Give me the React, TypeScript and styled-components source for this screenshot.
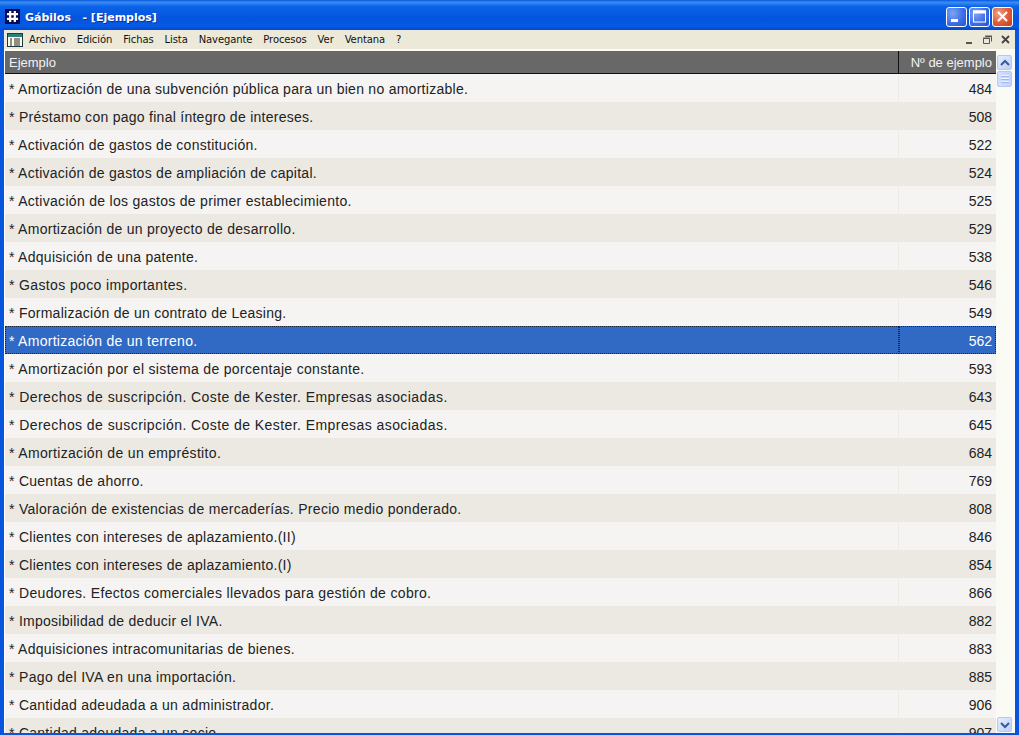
import styled, { createGlobalStyle } from 'styled-components';

const GlobalStyle = createGlobalStyle`
  html, body {
    margin: 0;
    padding: 0;
    overflow: hidden;
    background: #0054e3;
  }
`;

const Win = styled.div`
  width: 1019px;
  height: 735px;
  display: flex;
  flex-direction: column;
  overflow: hidden;
  font-family: "Liberation Sans", Arial, sans-serif;
  background: #0855dd;
`;

const TitleBar = styled.div`
  height: 30px;
  flex: none;
  display: flex;
  align-items: center;
  padding: 3px 6px 0 5px;
  box-sizing: border-box;
  background: linear-gradient(180deg, #0a5be0 0%, #3a8cf5 8%, #0a62e8 22%, #0555dd 60%, #0559e4 88%, #0347c8 100%);
`;

const AppIcon = styled.div`
  width: 15px;
  height: 15px;
  background: #000a50;
  margin-right: 5px;
  display: flex;
  align-items: center;
  justify-content: center;
`;

const TitleText = styled.span`
  color: #fff;
  font-family: "DejaVu Sans", sans-serif;
  font-weight: bold;
  font-size: 11px;
  margin-top: 1px;
  white-space: pre;
  text-shadow: 1px 1px 0 #0a2f9a;
  flex: 1;
`;

const WinButtons = styled.div`
  display: flex;
  gap: 2px;
`;

const WinButton = styled.div<{ $close?: boolean }>`
  width: 21px;
  height: 20px;
  box-sizing: border-box;
  border: 1px solid #fff;
  border-radius: 3px;
  display: flex;
  align-items: center;
  justify-content: center;
  background: ${p =>
    p.$close
      ? 'radial-gradient(circle at 30% 30%, #f0a088 0%, #e0603c 50%, #c23c18 100%)'
      : 'radial-gradient(circle at 30% 30%, #7fa4f5 0%, #3f6fe8 55%, #2450d0 100%)'};
`;

const Inner = styled.div`
  flex: 1;
  min-height: 0;
  display: flex;
  flex-direction: column;
  margin: 0 4px 2px 4px;
  background: #fff;
`;

const MenuBar = styled.div`
  height: 21px;
  flex: none;
  display: flex;
  align-items: center;
  box-sizing: border-box;
  background: #ece9d8;
  border-bottom: 2px solid #fbfaf5;
  padding-left: 3px;
  font-family: "DejaVu Sans", sans-serif;
  font-size: 10px;
  color: #111;
`;

const MenuIcon = styled.div`
  width: 16px;
  height: 14px;
  margin-right: 6px;
  display: flex;
`;

const MenuItem = styled.span`
  margin-right: 11px;
  letter-spacing: -0.1px;
`;

const MdiButtons = styled.div`
  margin-left: auto;
  display: flex;
  align-items: center;
  gap: 3px;
  padding-right: 2px;
`;

const MdiButton = styled.div`
  width: 15px;
  height: 15px;
  display: flex;
  align-items: center;
  justify-content: center;
`;

const Content = styled.div`
  flex: 1;
  min-height: 0;
  display: flex;
`;

const Grid = styled.div`
  flex: 1;
  min-width: 0;
  overflow: hidden;
  padding-left: 1px;
  background: #fff;
`;

const HeaderRow = styled.div`
  height: 23px;
  display: flex;
  background: #686868;
  border-bottom: 1px solid #111;
  box-sizing: border-box;
  color: #f2f2f2;
  font-size: 13px;
`;

const HeaderName = styled.div`
  flex: 1;
  display: flex;
  align-items: center;
  padding-left: 4px;
  border-right: 1px solid #111;
`;

const HeaderNumber = styled.div`
  width: 97px;
  display: flex;
  align-items: center;
  justify-content: flex-end;
  padding-right: 4px;
  box-sizing: border-box;
`;

const Row = styled.div<{ $alt: boolean; $selected: boolean }>`
  height: 28px;
  display: flex;
  align-items: center;
  font-size: 14px;
  color: ${p => (p.$selected ? '#fff' : '#222')};
  background: ${p => (p.$selected ? '#316ac5' : p.$alt ? '#ece9e2' : '#f5f4f2')};
`;

const NameCell = styled.div<{ $selected: boolean; $tracking: number }>`
  flex: 1;
  height: 100%;
  display: flex;
  align-items: center;
  padding: 2px 0 0 4px;
  box-sizing: border-box;
  white-space: nowrap;
  letter-spacing: ${p => p.$tracking}px;
  border-right: 1px solid ${p => (p.$selected ? '#316ac5' : '#ecebe6')};
  outline: ${p => (p.$selected ? '1px dotted #1a2438' : 'none')};
  outline-offset: -1px;
`;

const NumberCell = styled.div<{ $selected: boolean }>`
  width: 97px;
  height: 100%;
  display: flex;
  align-items: center;
  justify-content: flex-end;
  padding: 2px 4px 0 0;
  box-sizing: border-box;
  outline: ${p => (p.$selected ? '1px dotted #1a2438' : 'none')};
  outline-offset: -1px;
`;

const ScrollBar = styled.div`
  width: 19px;
  flex: none;
  display: flex;
  flex-direction: column;
  padding: 4px 0 1px 1px;
  box-sizing: border-box;
  background: #fbfbf6;
`;

const ScrollButton = styled.div`
  width: 15px;
  height: 15px;
  box-sizing: border-box;
  border: 1px solid #b4c8f6;
  border-radius: 2px;
  background: linear-gradient(135deg, #e6eefe, #bcd0fa);
  display: flex;
  align-items: center;
  justify-content: center;
`;

const ScrollThumb = styled.div`
  width: 15px;
  height: 16px;
  margin-top: 1px;
  box-sizing: border-box;
  border: 1px solid #b4c8f6;
  border-radius: 2px;
  background: linear-gradient(90deg, #d4e0fc, #c2d3fa);
  display: flex;
  flex-direction: column;
  align-items: center;
  justify-content: center;
  gap: 1px;

  i {
    display: block;
    width: 8px;
    height: 1px;
    background: #eef3fe;
    border-bottom: 1px solid #9db6ee;
  }
`;

const Spacer = styled.div`
  flex: 1;
`;

// third value: letter spacing, the original's hinted widths differ per line
const rows: [string, string, number?][] = [
  ['* Amortización de una subvención pública para un bien no amortizable.', '484'],
  ['* Préstamo con pago final íntegro de intereses.', '508'],
  ['* Activación de gastos de constitución.', '522'],
  ['* Activación de gastos de ampliación de capital.', '524'],
  ['* Activación de los gastos de primer establecimiento.', '525', 0.3],
  ['* Amortización de un proyecto de desarrollo.', '529'],
  ['* Adquisición de una patente.', '538'],
  ['* Gastos poco importantes.', '546', 0.37],
  ['* Formalización de un contrato de Leasing.', '549'],
  ['* Amortización de un terreno.', '562'],
  ['* Amortización por el sistema de porcentaje constante.', '593', 0.33],
  ['* Derechos de suscripción. Coste de Kester. Empresas asociadas.', '643', 0.43],
  ['* Derechos de suscripción. Coste de Kester. Empresas asociadas.', '645', 0.43],
  ['* Amortización de un empréstito.', '684', 0.33],
  ['* Cuentas de ahorro.', '769'],
  ['* Valoración de existencias de mercaderías. Precio medio ponderado.', '808', 0.3],
  ['* Clientes con intereses de aplazamiento.(II)', '846'],
  ['* Clientes con intereses de aplazamiento.(I)', '854'],
  ['* Deudores. Efectos comerciales llevados para gestión de cobro.', '866', 0.33],
  ['* Imposibilidad de deducir el IVA.', '882'],
  ['* Adquisiciones intracomunitarias de bienes.', '883'],
  ['* Pago del IVA en una importación.', '885', 0.33],
  ['* Cantidad adeudada a un administrador.', '906'],
  ['* Cantidad adeudada a un socio.', '907'],
];

const menus = ['Archivo', 'Edición', 'Fichas', 'Lista', 'Navegante', 'Procesos', 'Ver', 'Ventana', '?'];

function App() {
  return (
    <Win>
      <GlobalStyle />
      <TitleBar>
        <AppIcon>
          <svg width="13" height="13" viewBox="0 0 14 14">
            <path d="M4.5 1v12M9.5 1v12M1 4.5h12M1 9.5h12" stroke="#fff" strokeWidth="2.4" fill="none" />
          </svg>
        </AppIcon>
        <TitleText>{'Gábilos   - [Ejemplos]'}</TitleText>
        <WinButtons>
          <WinButton>
            <svg width="15" height="15" viewBox="0 0 15 15">
              <rect x="2" y="10" width="7" height="3" fill="#fff" />
            </svg>
          </WinButton>
          <WinButton>
            <svg width="15" height="15" viewBox="0 0 15 15">
              <rect x="1.5" y="2" width="12" height="11" fill="none" stroke="#fff" strokeWidth="1" />
              <rect x="1" y="1.5" width="13" height="3" fill="#fff" />
            </svg>
          </WinButton>
          <WinButton $close>
            <svg width="15" height="15" viewBox="0 0 15 15">
              <path d="M3 3l9 9M12 3l-9 9" stroke="#fff" strokeWidth="2.2" fill="none" />
            </svg>
          </WinButton>
        </WinButtons>
      </TitleBar>
      <Inner>
        <MenuBar>
          <MenuIcon>
            <svg width="16" height="14" viewBox="0 0 16 14">
              <rect x="0.5" y="0.5" width="15" height="13" fill="#fdfbe8" stroke="#1c3a44" />
              <rect x="1" y="1" width="14" height="3" fill="#2f7f7f" />
              <path d="M3 6h2M3 8h2M3 10h2M3 12h2M7 6h6M7 8h6M7 10h6M7 12h6" stroke="#222" strokeWidth="1" />
            </svg>
          </MenuIcon>
          {menus.map(m => (
            <MenuItem key={m}>{m}</MenuItem>
          ))}
          <MdiButtons>
            <MdiButton>
              <svg width="11" height="11" viewBox="0 0 11 11">
                <rect x="2" y="8" width="6" height="2" fill="#555" />
              </svg>
            </MdiButton>
            <MdiButton>
              <svg width="11" height="11" viewBox="0 0 11 11">
                <path d="M3.5 2.5h6v5M1.5 4.5h6v5h-6z" fill="none" stroke="#555" />
                <path d="M3 2h7M1 4h7" stroke="#555" />
              </svg>
            </MdiButton>
            <MdiButton>
              <svg width="11" height="11" viewBox="0 0 11 11">
                <path d="M2 2l7 7M9 2l-7 7" stroke="#444" strokeWidth="1.8" fill="none" />
              </svg>
            </MdiButton>
          </MdiButtons>
        </MenuBar>
        <Content>
          <Grid>
            <HeaderRow>
              <HeaderName>Ejemplo</HeaderName>
              <HeaderNumber>Nº de ejemplo</HeaderNumber>
            </HeaderRow>
            {rows.map(([name, num, tracking = 0.27], i) => {
              const selected = num === '562';
              return (
                <Row key={num} $alt={i % 2 === 1} $selected={selected}>
                  <NameCell $selected={selected} $tracking={tracking}>{name}</NameCell>
                  <NumberCell $selected={selected}>{num}</NumberCell>
                </Row>
              );
            })}
          </Grid>
          <ScrollBar>
            <ScrollButton>
              <svg width="10" height="8" viewBox="0 0 10 8">
                <path d="M1 6l4-4 4 4" stroke="#3a5a9c" strokeWidth="2" fill="none" />
              </svg>
            </ScrollButton>
            <ScrollThumb>
              <i />
              <i />
              <i />
            </ScrollThumb>
            <Spacer />
            <ScrollButton>
              <svg width="10" height="8" viewBox="0 0 10 8">
                <path d="M1 2l4 4 4-4" stroke="#3a5a9c" strokeWidth="2" fill="none" />
              </svg>
            </ScrollButton>
          </ScrollBar>
        </Content>
      </Inner>
    </Win>
  );
}

export default App;
